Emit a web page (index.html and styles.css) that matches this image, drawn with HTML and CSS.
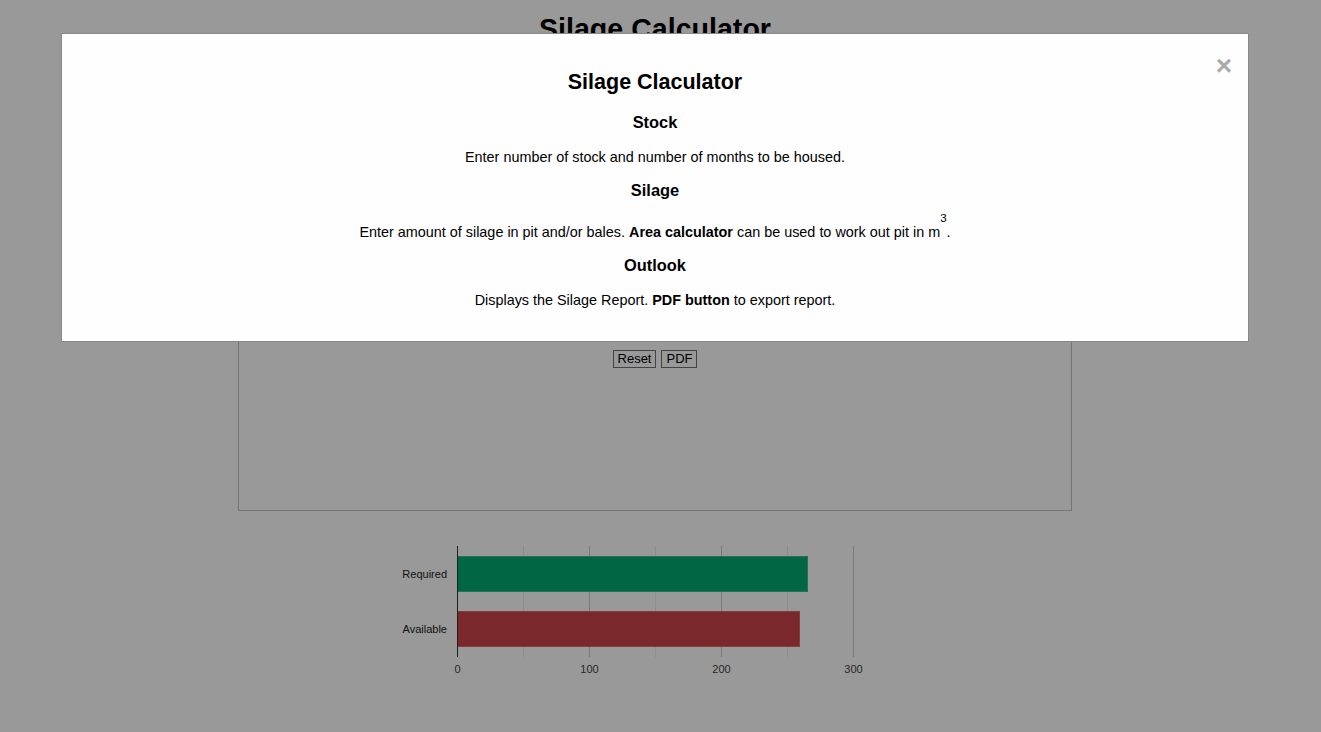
FILE: index.html
```html
<!DOCTYPE html>
<html>
<head>
<meta charset="utf-8">
<title>Silage Calculator</title>
<link rel="stylesheet" href="styles.css">
</head>
<body>
<div class="page">
  <h1 class="page-title">Silage Calculator</h1>
  <div class="calc-box">
    <div class="calc-body"></div>
    <div class="calc-actions">
      <button class="btn">Reset</button>
      <button class="btn">PDF</button>
    </div>
  </div>
  <div class="chart-wrap">
    <svg class="chart" width="550" height="150" viewBox="0 0 550 150" xmlns="http://www.w3.org/2000/svg">
      <g stroke="#ebebeb" stroke-width="1">
        <line x1="143.5" y1="11" x2="143.5" y2="122"/>
        <line x1="275.5" y1="11" x2="275.5" y2="122"/>
        <line x1="407.5" y1="11" x2="407.5" y2="122"/>
      </g>
      <g stroke="#cccccc" stroke-width="1">
        <line x1="209.5" y1="11" x2="209.5" y2="122"/>
        <line x1="341.5" y1="11" x2="341.5" y2="122"/>
        <line x1="473.5" y1="11" x2="473.5" y2="122"/>
      </g>
      <rect x="77.5" y="21.5" width="350" height="35" fill="#03aa72" stroke="#3fbb8f" stroke-width="1"/>
      <rect x="77.5" y="76.5" width="342" height="35" fill="#cc4449" stroke="#d56a6e" stroke-width="1"/>
      <line x1="77.5" y1="11" x2="77.5" y2="122" stroke="#333" stroke-width="1"/>
      <g class="row-label" fill="#222" text-anchor="end">
        <text x="67" y="43">Required</text>
        <text x="67" y="98">Available</text>
      </g>
      <g class="tick-label" fill="#444" text-anchor="middle">
        <text x="77.5" y="138">0</text>
        <text x="209.5" y="138">100</text>
        <text x="341.5" y="138">200</text>
        <text x="473.5" y="138">300</text>
      </g>
    </svg>
  </div>
</div>

<div class="modal">
  <div class="modal-content">
    <span class="close">&times;</span>
    <h2 class="modal-title">Silage Claculator</h2>
    <h3 class="section-title">Stock</h3>
    <p class="section-text">Enter number of stock and number of months to be housed.</p>
    <h3 class="section-title">Silage</h3>
    <p class="section-text">Enter amount of silage in pit and/or bales. <b>Area calculator</b> can be used to work out pit in m<sup>3</sup>.</p>
    <h3 class="section-title">Outlook</h3>
    <p class="section-text last">Displays the Silage Report. <b>PDF button</b> to export report.</p>
  </div>
</div>
</body>
</html>
```
FILE: styles.css
```css
html, body {
  margin: 0;
  padding: 0;
  background: #ffffff;
}

body {
  font-family: "Liberation Sans", Arial, sans-serif;
  font-size: 14px;
  color: #000;
  width: 1321px;
  height: 732px;
  overflow: hidden;
}

.page {
  width: 1310px;
  display: flex;
  flex-direction: column;
  align-items: center;
}

.page-title {
  font-size: 28.6px;
  font-weight: bold;
  margin: 13px 0 0;
  line-height: 32px;
}

.calc-box {
  box-sizing: border-box;
  width: 834px;
  height: 466px;
  border: 1px solid #c2c2c2;
  display: flex;
  flex-direction: column;
}

.calc-body {
  height: 304px;
}

.calc-actions {
  display: flex;
  justify-content: center;
  gap: 5px;
}

.btn {
  font-family: "Liberation Sans", Arial, sans-serif;
  font-size: 13px;
  line-height: 14px;
  height: 18px;
  padding: 1px 4px;
  margin: 0;
  background: #fefefe;
  border: 1px solid #707070;
  border-radius: 0;
  color: #000;
}

.chart-wrap {
  display: flex;
  justify-content: center;
  width: 100%;
  margin-top: 24px;
}

.chart {
  display: block;
}

.row-label text,
.tick-label text {
  font-family: "Liberation Sans", Arial, sans-serif;
  font-size: 11px;
}

.modal {
  position: fixed;
  left: 0;
  top: 0;
  width: 100%;
  height: 100%;
  background: rgba(0, 0, 0, 0.4);
}

.modal-content {
  position: relative;
  box-sizing: border-box;
  width: 1188px;
  margin: 33px 0 0 61px;
  padding: 20px;
  background: #fefefe;
  border: 1px solid #888;
  text-align: center;
}

.close {
  position: absolute;
  top: 18px;
  right: 16px;
  color: #aaaaaa;
  font-size: 28px;
  font-weight: bold;
  line-height: 28px;
}

.modal-title {
  font-size: 21.5px;
  font-weight: bold;
  margin: 15.5px 0 18.4px;
}

.section-title {
  font-size: 16.4px;
  font-weight: bold;
  margin: 16px 0 17.5px;
}

.section-text {
  margin: 0;
  font-size: 14.4px;
}

.section-text.last {
  margin-bottom: 13px;
}

.section-text sup {
  font-size: 11.6px;
  vertical-align: 15px;
  line-height: 0;
}
```
